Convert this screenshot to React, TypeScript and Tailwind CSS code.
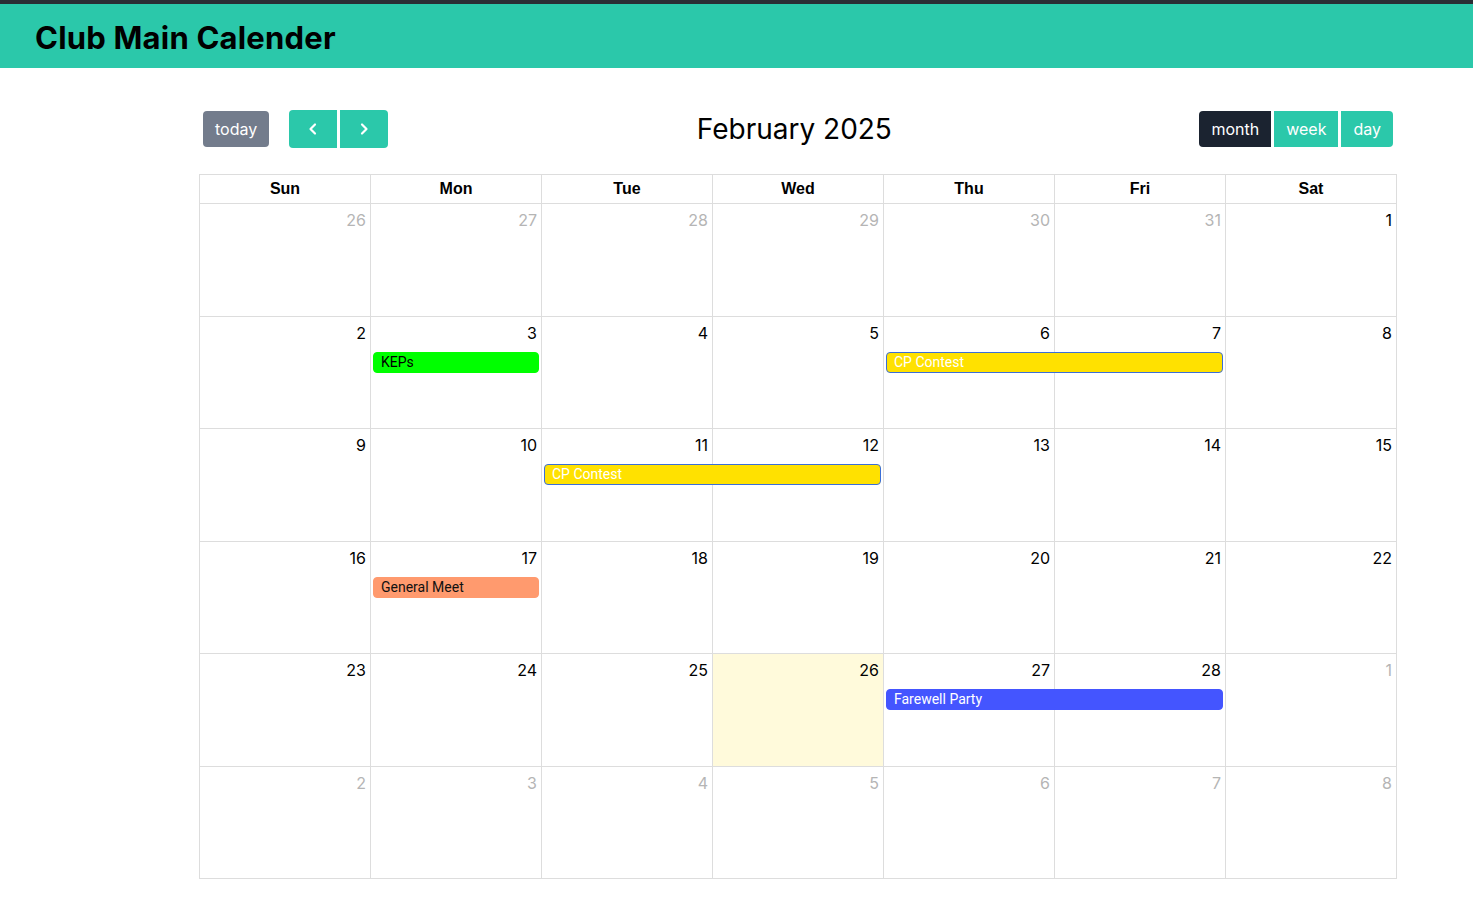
const weeks = [
  [
    { d: 26, other: true }, { d: 27, other: true }, { d: 28, other: true }, { d: 29, other: true },
    { d: 30, other: true }, { d: 31, other: true }, { d: 1 },
  ],
  [{ d: 2 }, { d: 3 }, { d: 4 }, { d: 5 }, { d: 6 }, { d: 7 }, { d: 8 }],
  [{ d: 9 }, { d: 10 }, { d: 11 }, { d: 12 }, { d: 13 }, { d: 14 }, { d: 15 }],
  [{ d: 16 }, { d: 17 }, { d: 18 }, { d: 19 }, { d: 20 }, { d: 21 }, { d: 22 }],
  [{ d: 23 }, { d: 24 }, { d: 25 }, { d: 26, today: true }, { d: 27 }, { d: 28 }, { d: 1, other: true }],
  [
    { d: 2, other: true }, { d: 3, other: true }, { d: 4, other: true }, { d: 5, other: true },
    { d: 6, other: true }, { d: 7, other: true }, { d: 8, other: true },
  ],
];

// events per week row, positioned with grid column classes
const events: Record<number, { title: string; cls: string }[]> = {
  1: [
    { title: 'KEPs', cls: 'col-start-2 col-span-1 bg-[#00ff00] border-[#00ff00] text-black' },
    { title: 'CP Contest', cls: 'col-start-5 col-span-2 bg-[#ffe100] border-[#3b6fd8] text-white' },
  ],
  2: [{ title: 'CP Contest', cls: 'col-start-3 col-span-2 bg-[#ffe100] border-[#3b6fd8] text-white' }],
  3: [{ title: 'General Meet', cls: 'col-start-2 col-span-1 bg-[#ff9a6e] border-[#ff9a6e] text-[#111]' }],
  4: [{ title: 'Farewell Party', cls: 'col-start-5 col-span-2 bg-[#4455ff] border-[#4455ff] text-white' }],
};

const colStart = [
  'col-start-1', 'col-start-2', 'col-start-3', 'col-start-4', 'col-start-5', 'col-start-6', 'col-start-7',
];

const days = ['Sun', 'Mon', 'Tue', 'Wed', 'Thu', 'Fri', 'Sat'];

const App = () => {
  return (
    <div className="min-h-[910px] bg-white font-['Inter',sans-serif]">
      <div className="h-1 bg-[#2a2e35]" />
      <header className="h-16 bg-[#2bc8aa] flex items-center pl-[35px] pt-1">
        <h1 className="text-[31px] font-bold text-black tracking-[0.2px]">Club Main Calender</h1>
      </header>

      <div className="ml-[199px] w-[1198px] mt-[42px]">
        {/* toolbar */}
        <div className="flex items-center justify-between h-[38px] px-1">
          <div className="flex items-center gap-5">
            <button className="h-9 px-3 rounded bg-[#737c8c] text-white text-base">today</button>
            <div className="flex gap-[3px]">
              <button className="h-[38px] w-12 rounded-l bg-[#2bc8aa] text-white flex items-center justify-center">
                <svg width="16" height="16" viewBox="0 0 16 16" fill="none" stroke="white" strokeWidth="2.2" strokeLinecap="round" strokeLinejoin="round">
                  <path d="M10 3.5 5.5 8l4.5 4.5" />
                </svg>
              </button>
              <button className="h-[38px] w-12 rounded-r bg-[#2bc8aa] text-white flex items-center justify-center">
                <svg width="16" height="16" viewBox="0 0 16 16" fill="none" stroke="white" strokeWidth="2.2" strokeLinecap="round" strokeLinejoin="round">
                  <path d="M6 3.5 10.5 8 6 12.5" />
                </svg>
              </button>
            </div>
          </div>
          <h2 className="text-[28px] text-black ml-[1px]">February 2025</h2>
          <div className="flex gap-[3px]">
            <button className="h-9 px-3 rounded-l bg-[#1b2330] text-white text-base">month</button>
            <button className="h-9 px-3 bg-[#2bc8aa] text-white text-base">week</button>
            <button className="h-9 px-3 rounded-r bg-[#2bc8aa] text-white text-base">day</button>
          </div>
        </div>

        {/* grid */}
        <div className="mt-[26px] border-t border-l border-[#dddddd]">
          <div className="grid grid-cols-7">
            {days.map((d) => (
              <div
                key={d}
                className="h-[29px] border-r border-b border-[#dddddd] flex items-center justify-center font-['Liberation_Sans',sans-serif] font-bold text-base text-black"
              >
                {d}
              </div>
            ))}
          </div>
          {weeks.map((week, wi) => (
            <div key={wi} className="grid grid-cols-7 grid-rows-[30px_26px_1fr] h-[112.5px]">
              {week.map((c, ci) => (
                <div
                  key={'bg' + ci}
                  className={`${colStart[ci]} row-start-1 row-span-3 border-r border-b border-[#dddddd] ${c.today ? 'bg-[#fffadb]' : ''}`}
                />
              ))}
              {week.map((c, ci) => (
                <div
                  key={'n' + ci}
                  className={`${colStart[ci]} row-start-1 text-right pr-[5px] pt-[4px] text-base leading-6 ${c.other ? 'text-[#b5b5b5]' : 'text-black'}`}
                >
                  {c.d}
                </div>
              ))}
              {(events[wi] || []).map((e, ei) => (
                <div
                  key={'e' + ei}
                  className={`${e.cls} row-start-2 self-end ml-[2px] mr-[3px] h-[21px] rounded border px-[7px] text-sm leading-[19px] font-['Roboto',sans-serif] truncate`}
                >
                  {e.title}
                </div>
              ))}
            </div>
          ))}
        </div>
      </div>
    </div>
  );
};

export default App;
